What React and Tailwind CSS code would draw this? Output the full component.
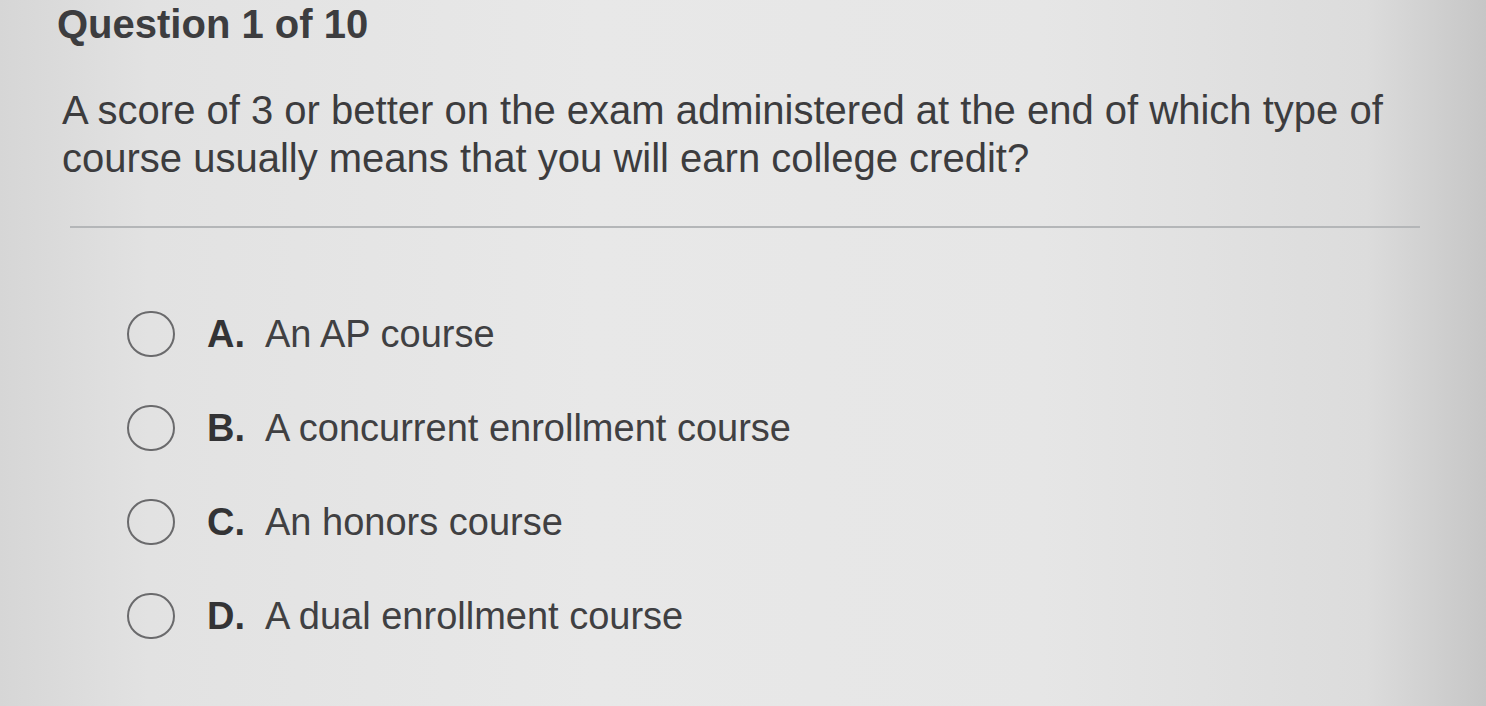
export default function App() {
  const options = [
    { l: "A.", t: "An AP course" },
    { l: "B.", t: "A concurrent enrollment course" },
    { l: "C.", t: "An honors course" },
    { l: "D.", t: "A dual enrollment course" },
  ];
  return (
    <div
      className="w-[1486px] h-[706px] overflow-hidden text-[#3d3d3f] bg-[linear-gradient(90deg,#d6d6d6_0%,#e2e2e2_10%,#e8e8e8_40%,#e6e6e6_70%,#dcdcdc_92%,#c6c6c6_100%)]"
      style={{ fontFamily: '"Liberation Sans", Arial, sans-serif' }}
    >
      <div className="pl-[57px] pt-[4px]">
        <h1 className="text-[40px] leading-[40px] font-bold">Question 1 of 10</h1>
        <p className="mt-[42px] pl-[5px] text-[40px] leading-[48px] text-[#3c3c3e]">
          A score of 3 or better on the exam administered at the end of which type of
          <br />
          course usually means that you will earn college credit?
        </p>
        <div className="mt-[44px] ml-[13px] w-[1350px] h-[2px] bg-[#b4b6b8]" />
        <div className="mt-[82px] pl-[70px] flex flex-col gap-[46px]">
          {options.map((o) => (
            <div key={o.l} className="flex items-center h-[48px]">
              <div className="w-[48px] h-[46px] rounded-full border-2 border-[#6a6a6c] shrink-0" />
              <div className="ml-[32px] w-[58px] text-[38px] font-bold text-[#333335]">{o.l}</div>
              <div className="text-[38px] text-[#404042]">{o.t}</div>
            </div>
          ))}
        </div>
      </div>
    </div>
  );
}
